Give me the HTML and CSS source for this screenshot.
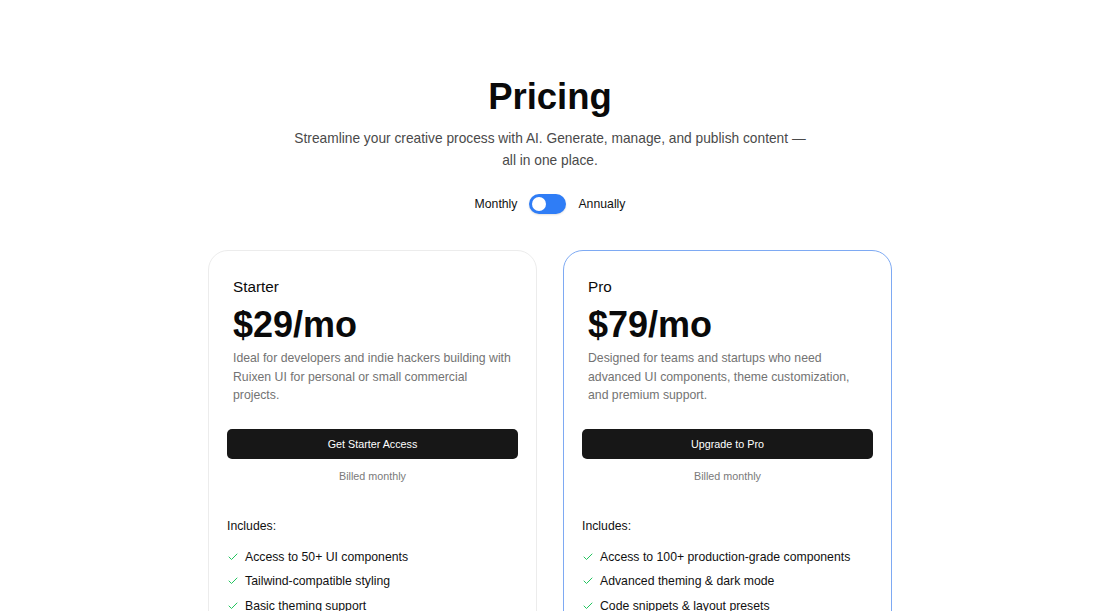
FILE: index.html
```html
<!DOCTYPE html>
<html lang="en">
<head>
<meta charset="utf-8">
<title>Pricing</title>
<link rel="stylesheet" href="styles.css">
</head>
<body>
<section class="pricing">
  <h1 class="title">Pricing</h1>
  <p class="subtitle">Streamline your creative process with AI. Generate, manage, and publish content — all in one place.</p>
  <div class="toggle-row">
    <span class="toggle-label">Monthly</span>
    <span class="switch"><span class="knob"></span></span>
    <span class="toggle-label">Annually</span>
  </div>
  <div class="cards">
    <div class="card">
      <div class="card-head">
        <div class="plan">Starter</div>
        <div class="price">$29/mo</div>
        <p class="desc">Ideal for developers and indie hackers building with Ruixen UI for personal or small commercial projects.</p>
      </div>
      <button class="cta">Get Starter Access</button>
      <div class="billed">Billed monthly</div>
      <div class="includes">Includes:</div>
      <ul class="features">
        <li><svg class="check" viewBox="0 0 24 24"><path d="M20 6 9 17l-5-5"/></svg>Access to 50+ UI components</li>
        <li><svg class="check" viewBox="0 0 24 24"><path d="M20 6 9 17l-5-5"/></svg>Tailwind-compatible styling</li>
        <li><svg class="check" viewBox="0 0 24 24"><path d="M20 6 9 17l-5-5"/></svg>Basic theming support</li>
        <li><svg class="check" viewBox="0 0 24 24"><path d="M20 6 9 17l-5-5"/></svg>Community support</li>
      </ul>
    </div>
    <div class="card card-pro">
      <div class="card-head">
        <div class="plan">Pro</div>
        <div class="price">$79/mo</div>
        <p class="desc">Designed for teams and startups who need advanced UI components, theme customization, and premium support.</p>
      </div>
      <button class="cta">Upgrade to Pro</button>
      <div class="billed">Billed monthly</div>
      <div class="includes">Includes:</div>
      <ul class="features">
        <li><svg class="check" viewBox="0 0 24 24"><path d="M20 6 9 17l-5-5"/></svg>Access to 100+ production-grade components</li>
        <li><svg class="check" viewBox="0 0 24 24"><path d="M20 6 9 17l-5-5"/></svg>Advanced theming &amp; dark mode</li>
        <li><svg class="check" viewBox="0 0 24 24"><path d="M20 6 9 17l-5-5"/></svg>Code snippets &amp; layout presets</li>
        <li><svg class="check" viewBox="0 0 24 24"><path d="M20 6 9 17l-5-5"/></svg>Priority email support</li>
      </ul>
    </div>
  </div>
</section>
</body>
</html>
```

FILE: styles.css
```css
* { box-sizing: border-box; }
html, body { margin: 0; padding: 0; background: #ffffff; }
body {
  font-family: "Liberation Sans", Arial, sans-serif;
  color: #0a0a0a;
}
.pricing {
  display: flex;
  flex-direction: column;
  align-items: center;
  padding-top: 73px;
}
.title {
  margin: 0;
  font-size: 36.5px;
  line-height: 48px;
  font-weight: 700;
  color: #0a0a0a;
}
.subtitle {
  margin: 7px 0 0;
  max-width: 518px;
  text-align: center;
  font-size: 13.75px;
  line-height: 22px;
  color: #4a4a4a;
}
.toggle-row {
  display: flex;
  align-items: center;
  gap: 12px;
  margin-top: 22px;
  height: 20px;
}
.toggle-label {
  font-size: 12.25px;
  line-height: 20px;
  color: #111;
}
.switch {
  display: flex;
  align-items: center;
  width: 37px;
  height: 20px;
  border-radius: 10px;
  background: #2f7df6;
  padding: 0 3px;
  box-shadow: 0 1px 2px rgba(0,0,0,0.12);
}
.knob {
  width: 14px;
  height: 14px;
  border-radius: 50%;
  background: #fff;
}
.cards {
  display: grid;
  grid-template-columns: 329px 329px;
  gap: 26px;
  margin-top: 36px;
}
.card {
  border: 1px solid #ececec;
  border-radius: 20px;
  padding: 24px 18px 40px;
  background: #fff;
}
.card-pro {
  border-color: #7eaaf3;
}
.card-head {
  padding: 0 6px;
}
.plan {
  font-size: 15.25px;
  line-height: 24px;
  color: #0a0a0a;
}
.price {
  margin-top: 6px;
  font-size: 36px;
  line-height: 40px;
  font-weight: 700;
  color: #0a0a0a;
}
.desc {
  margin: 4px 0 0;
  font-size: 12.25px;
  line-height: 18.5px;
  color: #737373;
}
.cta {
  display: block;
  width: 100%;
  height: 30px;
  margin-top: 24px;
  border: none;
  border-radius: 5px;
  background: #171717;
  color: #fff;
  font-family: "Liberation Sans", Arial, sans-serif;
  font-size: 10.75px;
}
.billed {
  margin-top: 9px;
  text-align: center;
  font-size: 10.75px;
  line-height: 16px;
  color: #7a7a7a;
}
.includes {
  margin-top: 32px;
  font-size: 12.25px;
  line-height: 20px;
  color: #111;
}
.features {
  list-style: none;
  margin: 11px 0 0;
  padding: 0;
  display: flex;
  flex-direction: column;
  gap: 4.5px;
}
.features li {
  display: flex;
  align-items: center;
  gap: 6px;
  font-size: 12.25px;
  line-height: 20px;
  color: #111;
}
.check {
  width: 12px;
  height: 12px;
  fill: none;
  stroke: #22c55e;
  stroke-width: 2;
  stroke-linecap: round;
  stroke-linejoin: round;
  flex-shrink: 0;
}
```
